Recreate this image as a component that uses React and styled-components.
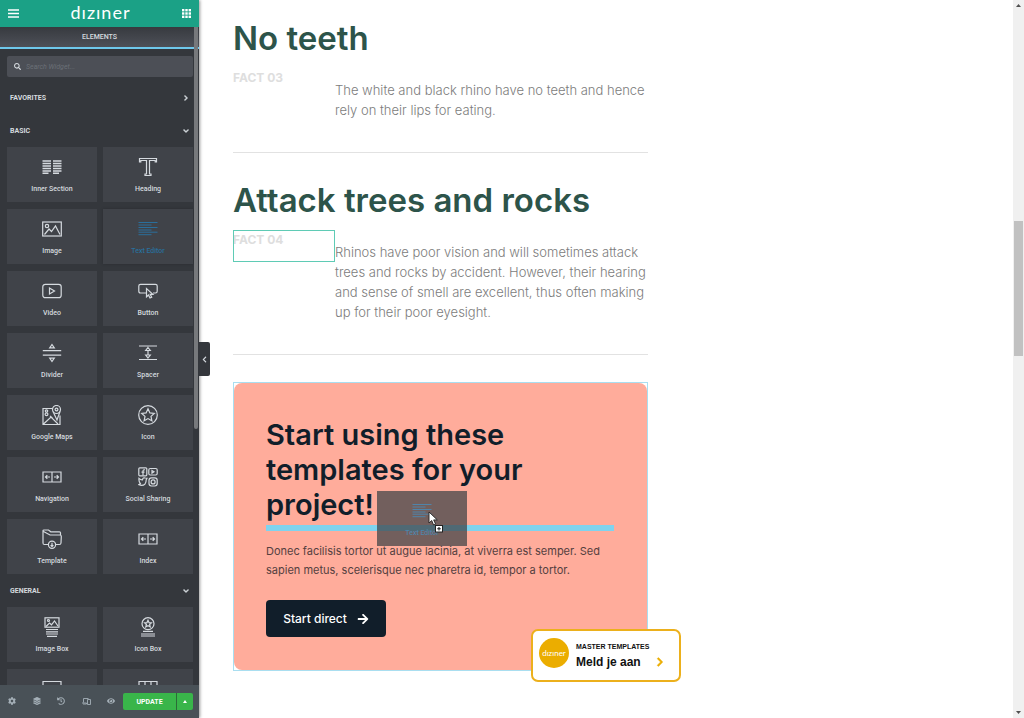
import React from 'react';
import styled, { createGlobalStyle } from 'styled-components';
import {
  FaArrowRight,
  FaChevronDown,
  FaChevronLeft,
  FaChevronRight,
  FaCog,
  FaEye,
  FaHistory,
  FaLayerGroup,
  FaSearch,
} from 'react-icons/fa';

const basicWidgets = [
  { icon: 'section', label: 'Inner Section' },
  { icon: 'heading', label: 'Heading' },
  { icon: 'image', label: 'Image' },
  { icon: 'text', label: 'Text Editor', active: true },
  { icon: 'video', label: 'Video' },
  { icon: 'button', label: 'Button' },
  { icon: 'divider', label: 'Divider' },
  { icon: 'spacer', label: 'Spacer' },
  { icon: 'maps', label: 'Google Maps' },
  { icon: 'star', label: 'Icon' },
  { icon: 'nav', label: 'Navigation' },
  { icon: 'social', label: 'Social Sharing' },
  { icon: 'template', label: 'Template' },
  { icon: 'nav', label: 'Index' },
];

const generalWidgets = [
  { icon: 'imageBox', label: 'Image Box' },
  { icon: 'iconBox', label: 'Icon Box' },
  { icon: 'carousel' },
  { icon: 'gallery' },
];

// Widget icons, all on a 20x20 grid
const shapes = {
  section: (
    <path d="M.5 4H9M.5 6.5H9M.5 9H9M.5 11.5H9M.5 14H9M.5 16.3H6.5M11 4h8.500M11 6.500h8.500M11 9h8.500M11 11.500h8.500M11 14h8.500M11 16.300h6" strokeWidth="1.400" />
  ),
  heading: (
    <path d="M1.500 1.500h17v3.500h-1.300V3.500h-5.700v13.500h1.500v1.500H7V17h1.500V3.500H2.800V5H1.500z" />
  ),
  image: (
    <>
      <rect x=".7" y="3" width="18.600" height="14" />
      <circle cx="5" cy="7" r="1.700" />
      <path d="M2.500 15.500L7 10l2.500 2.500L13.500 7l4.500 8.500" />
    </>
  ),
  text: (
    <path d="M.5 3.500h19M.5 6h13M.5 8.500h19M.5 11h13M.5 13.200h19M.5 15.700h13" strokeWidth="1" />
  ),
  video: (
    <>
      <rect x=".8" y="3.300" width="18.400" height="13.400" rx="2.500" />
      <path d="M7.500 7v6l5-3z" />
    </>
  ),
  button: (
    <>
      <path d="M8 12H2.500Q.8 12 .8 10.300V5Q.8 3.300 2.500 3.300h15q1.700 0 1.700 1.700v5.300q0 1.700-1.700 1.700H15" />
      <path d="M8.500 7.500v8.300l2-1.800 1.500 3 1.700-.8-1.500-2.900h2.700z" />
    </>
  ),
  divider: (
    <path d="M.8 7.700h18.400M.8 12.200h18.400M10 1.500l2.300 3.300H7.700zM10 18.500l2.300-3.300H7.700z" />
  ),
  spacer: (
    <path d="M1 3h18M1 16.500h18M10 7v5.500M10 4.500L12.300 7.500H7.700zM10 15l2.300-3H7.700z" />
  ),
  maps: (
    <>
      <path d="M11 3.500H1v16h17v-9M1.500 19L9 12l7 7M8 11l2.500 2" />
      <circle cx="14.500" cy="4.500" r="4" />
      <circle cx="14.500" cy="4.500" r="1.400" />
      <path d="M11 6.500l4 8.500 3-8.500" />
      <circle cx="4.500" cy="6" r="1.200" />
      <circle cx="4.500" cy="9.200" r="1.400" />
    </>
  ),
  star: (
    <>
      <circle cx="10" cy="10" r="9.300" />
      <path d="M10 3.800l1.900 4.100 4.400.5-3.300 3 .9 4.400-3.900-2.200-3.900 2.200.9-4.400-3.300-3 4.400-.5z" />
    </>
  ),
  nav: (
    <path d="M1 5h18v10H1zM10 5v10M3.500 10H8M5.300 8.200L3.500 10l1.800 1.800M12 10h4.500M14.700 8.200l1.800 1.800-1.800 1.800" />
  ),
  social: (
    <>
      <rect x=".8" y=".8" width="8" height="8" rx="1" />
      <path d="M7 2.800Q5 2.500 5 4.500v4M3.500 5.200h3" />
      <rect x="10.800" y="1.500" width="8.400" height="6.500" rx="1.500" />
      <path d="M14 3.500v2.600l2-1.300z" />
      <path d="M1 11.300q1.700 1.700 3.500 1.500.5-2.500 2.700-1.800l1.800.2-.8 1.600q0 5.700-5 5.600l-2.400-.7 1.600-1.100Q.5 14.500 1 11.300z" />
      <rect x="11" y="10.800" width="8.200" height="8.200" rx="2.400" />
      <circle cx="15.100" cy="14.900" r="2" />
    </>
  ),
  template: (
    <>
      <path d="M6 15.500H2.500Q1 15.500 1 14V2q0-1 1-1h4.500l2.300 1.800h8.700q1 0 1 1V6M1.500 2.500L8 6h10q1.300 0 1.300 1.500l-.3 6.500q-.2 1.500-1.500 1.500H14" />
      <circle cx="10" cy="15.700" r="3.600" />
      <path d="M10 13.700v3.700M8.600 16.200l1.400 1.300 1.400-1.300" />
    </>
  ),
  imageBox: (
    <>
      <rect x="3" y=".8" width="14" height="9.400" />
      <circle cx="6.500" cy="3.500" r="1" />
      <path d="M4 9.500l3.500-3.500 2 1.800L12.500 4l3.500 5M4 12.500h12M4 14.800h12M4 17h12M5 19.300h10" />
    </>
  ),
  iconBox: (
    <>
      <circle cx="10" cy="6.700" r="6" />
      <path d="M10 3.300l1 2.300 2.400.2-1.800 1.700.6 2.400L10 8.700 7.800 9.900l.6-2.400-1.800-1.700L9 5.600z" />
      <path d="M5 14.300h10M3 17h14M3 19h14" />
    </>
  ),
  carousel: (
    <path d="M1 2.500h18v13H1zM3 12l5-5 3 3 3-3 3 5" />
  ),
  gallery: (
    <path d="M1 2.500h18v15H1zM7 2.500v15M13 2.500v15M1 10h18" />
  ),
};

const WidgetIcon = ({ name }) => (
  <IconSvg viewBox="0 0 20 20" aria-hidden="true">
    {shapes[name]}
  </IconSvg>
);

const WidgetTile = ({ icon, label, active }) => (
  <Tile type="button" $active={active}>
    <WidgetIcon name={icon} />
    {label}
  </Tile>
);

const Panel = () => (
  <PanelWrapper>
    <PanelHeader>
      <HeaderButton type="button" aria-label="Menu">
        <svg width="11" height="9" viewBox="0 0 11 9">
          <path d="M0 1h11M0 4.500h11M0 8h11" stroke="#fff" strokeWidth="1.600" />
        </svg>
      </HeaderButton>
      <Logo>dızıner</Logo>
      <HeaderButton type="button" aria-label="Widgets">
        <svg width="9" height="9" viewBox="0 0 9 9" fill="#fff">
          {[0, 3.3, 6.6].map(y => [0, 3.3, 6.6].map(x => (
            <rect key={`${x}-${y}`} x={x} y={y} width="2.400" height="2.400" />
          )))}
        </svg>
      </HeaderButton>
    </PanelHeader>

    <PanelBody>
      <Tab type="button">ELEMENTS</Tab>
      <SearchBox>
        <FaSearch />
        <SearchInput placeholder="Search Widget..." aria-label="Search Widget" />
      </SearchBox>

      <CategoryTitle type="button">FAVORITES<FaChevronRight /></CategoryTitle>
      <CategoryTitle type="button">BASIC<FaChevronDown /></CategoryTitle>
      <Tiles>
        {basicWidgets.map(w => <WidgetTile key={w.label} {...w} />)}
      </Tiles>
      <CategoryTitle type="button">GENERAL<FaChevronDown /></CategoryTitle>
      <Tiles>
        {generalWidgets.map(w => <WidgetTile key={w.icon} {...w} />)}
      </Tiles>
      <PanelThumb />
    </PanelBody>

    <PanelFooter>
      <Tools>
        <ToolButton type="button" aria-label="Settings"><FaCog /></ToolButton>
        <ToolButton type="button" aria-label="Navigator"><FaLayerGroup /></ToolButton>
        <ToolButton type="button" aria-label="History"><FaHistory /></ToolButton>
        <ToolButton type="button" aria-label="Responsive mode">
          <svg width="9" height="9" viewBox="0 0 18 16" fill="none" stroke="currentColor" strokeWidth="1.800">
            <path d="M3 10V2h10M0 11h9v2H2M11 4h6v10h-6z" />
          </svg>
        </ToolButton>
        <ToolButton type="button" aria-label="Preview"><FaEye /></ToolButton>
      </Tools>
      <UpdateButton type="button">UPDATE</UpdateButton>
      <UpdateMore type="button" aria-label="Save options">
        <svg width="4" height="3" viewBox="0 0 4 3" fill="#fff"><path d="M2 0l2 3H0z" /></svg>
      </UpdateMore>
    </PanelFooter>

    <CollapseButton type="button" aria-label="Hide panel"><FaChevronLeft /></CollapseButton>
  </PanelWrapper>
);

const FactSection = ({ title, number, selected, children }) => (
  <Fact>
    <FactTitle>{title}</FactTitle>
    <FactRow>
      <FactNumber $selected={selected}>FACT {number}</FactNumber>
      <FactText>{children}</FactText>
    </FactRow>
  </Fact>
);

const App = () => (
  <>
    <GlobalStyle />
    <Page>
      <Panel />
      <Canvas>
        <Column>
          <FactSection title="No teeth" number="03">
            The white and black rhino have no teeth and hence<br />
            rely on their lips for eating.
          </FactSection>
          <FactSection title="Attack trees and rocks" number="04" selected>
            Rhinos have poor vision and will sometimes attack<br />
            trees and rocks by accident. However, their hearing<br />
            and sense of smell are excellent, thus often making<br />
            up for their poor eyesight.
          </FactSection>

          <CardOutline>
            <Card>
              <CardTitle>
                Start using these<br />
                templates for your<br />
                project!
              </CardTitle>
              <DropLine />
              <CardText>
                Donec facilisis tortor ut augue lacinia, at viverra est semper. Sed<br />
                sapien metus, scelerisque nec pharetra id, tempor a tortor.
              </CardText>
              <StartButton type="button">Start direct<FaArrowRight /></StartButton>
            </Card>
            <DragTile>
              <WidgetIcon name="text" />
              Text Editor
              <Cursor viewBox="0 0 16 22" aria-hidden="true">
                <path d="M1 1v11l2.700-2.500L5.600 14l2-.9-1.900-4.200h3.600z" fill="#fff" stroke="#222" strokeWidth=".9" />
                <rect x="7.500" y="14.500" width="7" height="6.500" fill="#fff" stroke="#222" />
                <path d="M11 16v3.600M9.200 17.800h3.600" stroke="#222" strokeWidth="1.100" />
              </Cursor>
            </DragTile>
          </CardOutline>
        </Column>
      </Canvas>

      <Scrollbar>
        <svg width="5" height="3" viewBox="0 0 5 3" fill="#505050"><path d="M2.500 0L5 3H0z" /></svg>
        <Track><Thumb /></Track>
        <svg width="5" height="3" viewBox="0 0 5 3" fill="#505050"><path d="M2.500 3L5 0H0z" /></svg>
      </Scrollbar>

      <Promo href="#aanmelden">
        <PromoLogo>dızıner</PromoLogo>
        <span>
          <PromoLabel>MASTER TEMPLATES</PromoLabel>
          <PromoAction>Meld je aan <FaChevronRight /></PromoAction>
        </span>
      </Promo>
    </Page>
  </>
);

const GlobalStyle = createGlobalStyle`
  * {
    box-sizing: border-box;
  }
  body {
    margin: 0;
    background: #fff;
    font-family: Roboto, "Liberation Sans", sans-serif;
  }
  button, input {
    font-family: inherit;
    margin: 0;
    padding: 0;
    border: 0;
    background: none;
  }
`;

const Page = styled.div`
  display: flex;
  height: 100vh;
  overflow: hidden;
`;

const PanelWrapper = styled.aside`
  position: relative;
  z-index: 1;
  display: flex;
  flex-direction: column;
  flex: none;
  width: 199px;
  background: #34373c;
  box-shadow: 1px 0 3px rgba(0, 0, 0, 0.4);
`;

const PanelHeader = styled.header`
  display: flex;
  align-items: center;
  justify-content: space-between;
  flex: none;
  height: 27px;
  padding: 0 8px;
  background: #1ba186;
`;

const HeaderButton = styled.button`
  display: flex;
`;

const Logo = styled.span`
  padding-bottom: 3px;
  color: #fff;
  font: 400 18px/24px Lato, sans-serif;
  letter-spacing: 1px;
`;

const PanelBody = styled.div`
  position: relative;
  flex: 1;
  min-height: 0;
  overflow: hidden;
`;

const PanelThumb = styled.div`
  position: absolute;
  top: 0;
  right: 1px;
  width: 4px;
  height: 402px;
  border-radius: 0 0 2px 2px;
  background: #77797c;
`;

const Tab = styled.button`
  display: block;
  width: 100%;
  height: 22px;
  border-bottom: 2px solid #6ec8ec;
  background: linear-gradient(#373a3f, #4d5058);
  color: #d5dadf;
  font-size: 7px;
  font-weight: 500;
`;

const SearchBox = styled.label`
  display: flex;
  align-items: center;
  height: 21px;
  margin: 7px 6px 4px 7px;
  padding: 0 7px;
  border-radius: 2px;
  background: #4c4f56;
  color: #d5dadf;
  font-size: 7px;
`;

const SearchInput = styled.input`
  flex: 1;
  min-width: 0;
  margin-left: 5px;
  color: #d5dadf;
  font-size: 7px;
  font-style: italic;

  &::placeholder {
    color: #6b6f77;
  }
`;

const CategoryTitle = styled.button`
  display: flex;
  align-items: center;
  justify-content: space-between;
  width: 100%;
  height: 33px;
  padding: 0 10px;
  color: #d5dadf;
  font-size: 7px;
  font-weight: 700;

  svg {
    font-size: 6px;
    stroke: currentColor;
    stroke-width: 40px;
  }
`;

const Tiles = styled.div`
  display: grid;
  grid-template-columns: 1fr 1fr;
  gap: 7px 6px;
  padding: 0 6px 0 7px;
`;

const Tile = styled.button`
  display: flex;
  flex-direction: column;
  align-items: center;
  height: 55px;
  padding-top: 10px;
  background: #404349;
  box-shadow: ${props => (props.$active ? '0 0 3px rgba(0, 0, 0, 0.2)' : 'none')};
  color: ${props => (props.$active ? '#2a6f9c' : '#d5dadf')};
  font-size: 7px;
  font-weight: 500;
  line-height: 10px;
`;

const IconSvg = styled.svg`
  width: 20px;
  height: 20px;
  margin-bottom: 7px;
  fill: none;
  stroke: currentColor;
  stroke-width: 1.2px;
`;

const PanelFooter = styled.footer`
  position: relative;
  display: flex;
  align-items: center;
  flex: none;
  height: 33px;
  padding: 0 6px 0 0;
  background: #495157;
`;

const Tools = styled.div`
  display: flex;
  flex: 1;
`;

const ToolButton = styled.button`
  display: flex;
  justify-content: center;
  flex: 1;
  color: #a4afb7;
  font-size: 8px;
`;

const UpdateButton = styled.button`
  width: 53px;
  height: 17px;
  border-radius: 2px 0 0 2px;
  background: #39b54a;
  color: #fff;
  font-size: 7px;
  font-weight: 700;
`;

const UpdateMore = styled.button`
  display: flex;
  align-items: center;
  justify-content: center;
  width: 17px;
  height: 17px;
  border-left: 1px solid #2c6b38;
  border-radius: 0 2px 2px 0;
  background: #39b54a;
`;

const CollapseButton = styled.button`
  position: absolute;
  top: calc(50% - 17px);
  left: 100%;
  display: flex;
  align-items: center;
  justify-content: center;
  width: 11px;
  height: 34px;
  border-radius: 0 2px 2px 0;
  background: #34373c;
  color: #d5dadf;
  font-size: 7px;
`;

const Canvas = styled.main`
  flex: 1;
  min-width: 0;
  padding: 18px 34px 0;
  font-family: Inter, "Open Sans", sans-serif;
`;

const Column = styled.div`
  max-width: 415px;
`;

const Fact = styled.section`
  padding-bottom: 32px;
  margin-bottom: 27px;
  border-bottom: 1px solid #e2e2e2;
`;

const FactTitle = styled.h2`
  margin: 0 0 10px;
  color: #2d544a;
  font-size: 33px;
  font-weight: 600;
  line-height: 40px;
`;

const FactRow = styled.div`
  display: flex;
`;

const FactNumber = styled.div`
  flex: none;
  width: 102px;
  height: 32px;
  outline: ${props => (props.$selected ? '1px solid #5fcbb5' : 'none')};
  outline-offset: -1px;
  color: #dedede;
  font-size: 12px;
  font-weight: 700;
  line-height: 20px;
`;

const FactText = styled.p`
  margin: 0;
  padding-top: 12px;
  color: #7c7c7c;
  font-size: 13px;
  font-weight: 300;
  line-height: 20px;
  white-space: nowrap;
`;

const CardOutline = styled.section`
  position: relative;
  border: 1px solid #a9def0;
`;

const Card = styled.div`
  padding: 34px 33px 33px 32px;
  border-radius: 8px;
  background: #ffac9b;
`;

const CardTitle = styled.h3`
  margin: 0;
  color: #111e2a;
  font-size: 29px;
  font-weight: 600;
  line-height: 35px;
`;

const DropLine = styled.div`
  height: 6px;
  margin: 3px 0 11px;
  background: #7fd3ee;
`;

const CardText = styled.p`
  margin: 0 0 20px;
  color: #54403f;
  font-size: 11px;
  line-height: 19px;
  white-space: nowrap;
`;

const StartButton = styled.button`
  display: flex;
  align-items: center;
  justify-content: center;
  gap: 10px;
  width: 120px;
  height: 37px;
  border-radius: 4px;
  background: #111e2a;
  color: #fff;
  font-size: 12px;
  font-weight: 500;
`;

const DragTile = styled.div`
  position: absolute;
  top: 108px;
  left: 143px;
  display: flex;
  flex-direction: column;
  align-items: center;
  width: 90px;
  height: 55px;
  padding-top: 10px;
  background: rgba(62, 66, 70, 0.73);
  color: #4f84aa;
  font: 500 7px/10px Roboto, sans-serif;
`;

const Cursor = styled.svg`
  position: absolute;
  top: 20px;
  left: 51px;
  width: 16px;
  height: 22px;
`;

const Scrollbar = styled.div`
  display: flex;
  flex-direction: column;
  align-items: center;
  flex: none;
  width: 11px;
  padding: 4px 0;
  background: #f0f0f0;
`;

const Track = styled.div`
  flex: 1;
  width: 9px;
  padding-top: 214px;
`;

const Thumb = styled.div`
  height: 135px;
  background: #c1c1c1;
`;

const Promo = styled.a`
  position: fixed;
  right: 343px;
  bottom: 36px;
  z-index: 2;
  display: flex;
  gap: 7px;
  width: 150px;
  height: 53px;
  padding: 7px 6px;
  border: 2px solid #ecb01c;
  border-radius: 7px;
  background: #fff;
  color: #111;
  font-family: "Liberation Sans", Arial, sans-serif;
  text-decoration: none;
`;

const PromoLogo = styled.span`
  display: flex;
  align-items: center;
  justify-content: center;
  width: 30px;
  height: 30px;
  border-radius: 50%;
  background: #ebad00;
  color: #fff;
  font: 400 8px/10px Lato, sans-serif;
`;

const PromoLabel = styled.span`
  display: block;
  padding-top: 4px;
  font-size: 7px;
  font-weight: 700;
  line-height: 10px;
`;

const PromoAction = styled.span`
  display: flex;
  align-items: center;
  gap: 14px;
  font-size: 12px;
  font-weight: 700;
  line-height: 20px;

  svg {
    color: #ebad00;
    font-size: 10px;
    stroke: currentColor;
    stroke-width: 30px;
  }
`;

export default App;
